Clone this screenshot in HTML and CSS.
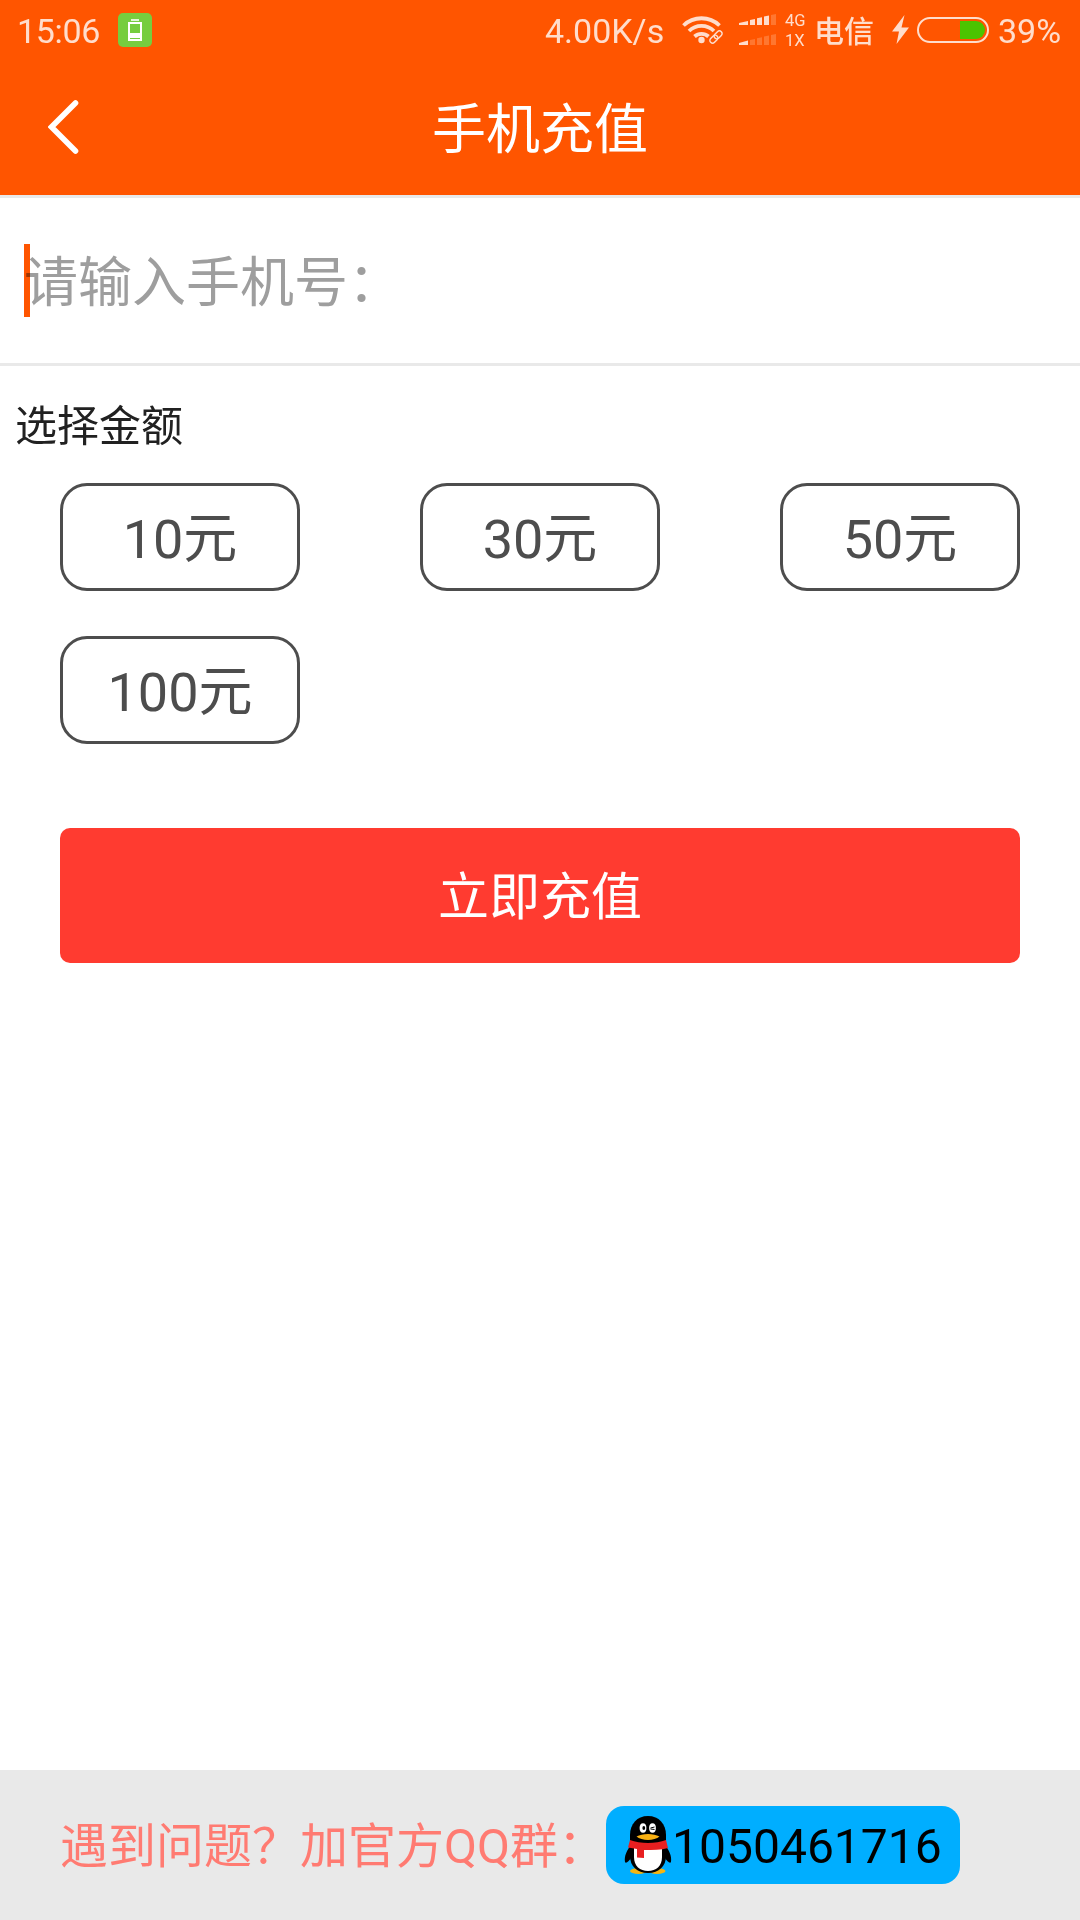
FILE: index.html
```html
<!DOCTYPE html>
<html lang="zh-CN">
<head>
  <meta charset="UTF-8">
  <meta name="viewport" content="width=device-width, initial-scale=1.0">
  <title>手机充值</title>
  <link rel="stylesheet" href="styles.css">
</head>
<body>
  <header class="header">
    <!-- Status bar -->
    <div class="status-bar">
      <span class="time">15:06</span>
      <svg class="app-icon" viewBox="0 0 34 34">
        <rect width="34" height="34" rx="5" fill="#76cd3f"/>
        <path d="M13 7h8" stroke="#fff" stroke-width="1.600"/>
        <rect x="11" y="10" width="12" height="17" fill="none" stroke="#fff" stroke-width="2"/>
        <rect x="12" y="20" width="10" height="5" fill="#fff"/>
      </svg>
      <span class="speed">4.00K/s</span>
      <svg class="wifi" viewBox="0 0 42 30">
        <g fill="none" stroke="#ffddcc" stroke-width="3.800">
          <path d="M1.500 10.500a26 26 0 0 1 36 0"/>
          <path d="M7 16a18 18 0 0 1 25 0"/>
          <path d="M12.500 21.500a10.500 10.500 0 0 1 14 0"/>
        </g>
        <circle cx="19.500" cy="25" r="3.200" fill="#ffddcc"/>
        <g transform="translate(34 22) rotate(-45)" fill="none">
          <rect x="-8" y="-3" width="9" height="6" rx="3" stroke="#ff5500" stroke-width="4"/>
          <rect x="-1" y="-3" width="9" height="6" rx="3" stroke="#ff5500" stroke-width="4"/>
          <rect x="-7.500" y="-2.700" width="9" height="5.400" rx="2.700" stroke="#ffddcc" stroke-width="1.500"/>
          <rect x="-1.500" y="-2.700" width="9" height="5.400" rx="2.700" stroke="#ffddcc" stroke-width="1.500"/>
        </g>
      </svg>
      <svg class="signal" viewBox="0 0 38 32">
        <g fill="#ffddcc">
          <path d="M0 9l9-2v4H0z"/>
          <path d="M11 6l5-1v6h-5z"/>
          <path d="M18 4.300l5-1V11h-5z"/>
          <path d="M25 2.500l5-1V11h-5z"/>
          <path d="M0 29l9-2.500V31H0z"/>
        </g>
        <g fill="#ff7730">
          <path d="M32 1l5-1v11h-5z"/>
          <path d="M11 26l5-1v6h-5z"/>
          <path d="M18 24.300l5-1V31h-5z"/>
          <path d="M25 22.500l5-1V31h-5z"/>
          <path d="M32 21l5-1v11h-5z"/>
        </g>
      </svg>
      <div class="network">
        <span>4G</span>
        <span>1X</span>
      </div>
      <span class="carrier">电信</span>
      <svg class="bolt" viewBox="0 0 18 30">
        <path d="M12.500 0L0 16.500h7L4.500 29 17 12.500H9.500z" fill="#ffddcc"/>
      </svg>
      <svg class="battery" viewBox="0 0 72 26">
        <rect x="1" y="1" width="70" height="24" rx="12" fill="none" stroke="#ffddcc" stroke-width="2"/>
        <path d="M43 4h16a9 9 0 0 1 0 18H43z" fill="#4bc400"/>
      </svg>
      <span class="percent">39%</span>
    </div>

    <!-- Title bar -->
    <div class="title-bar">
      <svg class="back" viewBox="0 0 32 54">
        <path d="M27.500 3L3.500 27l24 24" fill="none" stroke="#fff" stroke-width="5.600" stroke-linecap="round"/>
      </svg>
      <h1>手机充值</h1>
    </div>
  </header>

  <main class="content">
    <div class="phone-row">
      <span class="cursor"></span>
      <span class="placeholder">请输入手机号：</span>
    </div>

    <h2 class="label">选择金额</h2>
    <div class="amounts">
      <button class="amount">10元</button>
      <button class="amount">30元</button>
      <button class="amount">50元</button>
      <button class="amount">100元</button>
    </div>

    <button class="submit">立即充值</button>
  </main>

  <footer class="footer">
    <span class="help">遇到问题？加官方QQ群：</span>
    <a class="group">
      <svg class="qq" viewBox="0 0 48 58">
        <ellipse cx="14.500" cy="55" rx="8.500" ry="3" fill="#f5b511"/>
        <ellipse cx="33" cy="55" rx="8.500" ry="3" fill="#f5b511"/>
        <path d="M7 29C3 34 0 40 1 46c1 2 4-1 6-4zM41 29c4 5 7 11 6 17-1 2-4-1-6-4z" fill="#000"/>
        <path d="M24 0C13 0 6 8 6 19v21c0 10 7 17 18 17s18-7 18-17V19C42 8 35 0 24 0z" fill="#000"/>
        <path d="M10 31h28v10c0 9-6 14-14 14s-14-5-14-14z" fill="#fff"/>
        <ellipse cx="19" cy="12" rx="3.400" ry="4.700" fill="#fff"/>
        <ellipse cx="28.500" cy="12" rx="3.400" ry="4.700" fill="#fff"/>
        <ellipse cx="19.800" cy="12" rx="1.400" ry="2" fill="#000"/>
        <path d="M26.500 12l4-1M26.500 13l4 .5" stroke="#000" stroke-width="1"/>
        <path d="M12.500 20.500c6-3.500 17-3.500 23 0-5 4.500-18 4.500-23 0z" fill="#f9b112"/>
        <path d="M6 24c10 4 26 4 36 0l2 8c-7 2-15 2-24 2v8l-7-.5V33l-9-1.500z" fill="#e81f20"/>
      </svg>
      <span>1050461716</span>
    </a>
  </footer>
</body>
</html>
```

FILE: styles.css
```css
* {
  box-sizing: border-box;
}

body {
  margin: 0;
  height: 1920px;
  display: flex;
  flex-direction: column;
  background: #fff;
  font-family: Roboto, "Noto Sans CJK SC", sans-serif;
  overflow: hidden;
}

h1, h2 {
  margin: 0;
  font-weight: 400;
}

button {
  padding: 0;
  font-family: inherit;
  cursor: pointer;
}

svg {
  display: block;
  flex-shrink: 0;
}

/* Header */
.header {
  height: 198px;
  background: #ff5500;
  border-bottom: 3px solid #e9e9e9;
}

.status-bar {
  height: 60px;
  padding: 1px 18px 0 17px;
  display: flex;
  align-items: center;
  color: #ffddcc;
  font-size: 34px;
  line-height: 60px;
  white-space: nowrap;
}

.time {
  width: 101px;
  letter-spacing: -0.3px;
}

.app-icon {
  width: 34px;
  height: 34px;
  margin-bottom: 1px;
}

.speed {
  width: 120px;
  margin-left: 393px;
}

.wifi {
  width: 42px;
  height: 30px;
  margin-left: 17px;
  margin-bottom: 2px;
}

.signal {
  width: 38px;
  height: 32px;
  margin-left: 15px;
  margin-bottom: 1px;
}

.network {
  width: 24px;
  margin-left: 8px;
  display: flex;
  flex-direction: column;
  font-size: 16.5px;
  line-height: 20px;
}

.carrier {
  width: 60px;
  margin-left: 5px;
  padding-top: 2px;
  font-size: 30px;
  font-weight: 500;
}

.bolt {
  width: 18px;
  height: 30px;
  margin-left: 18px;
  margin-bottom: 1px;
}

.battery {
  width: 72px;
  height: 26px;
  margin-left: 7px;
  margin-bottom: 1px;
}

.percent {
  margin-left: 9px;
}

.title-bar {
  height: 135px;
  padding: 0 48px;
  display: grid;
  grid-template-columns: 32px 1fr 32px;
  align-items: center;
  color: #fff;
}

.back {
  width: 32px;
  height: 54px;
  margin-bottom: 1px;
}

.title-bar h1 {
  padding-top: 7px;
  text-align: center;
  font-size: 54px;
  line-height: 80px;
}

/* Form */
.content {
  flex: 1;
}

.phone-row {
  height: 168px;
  padding-left: 24px;
  display: flex;
  align-items: center;
  border-bottom: 3px solid #e9e9e9;
}

.cursor {
  width: 6px;
  height: 73px;
  margin-right: -6px;
  background: #ff5500;
}

.placeholder {
  padding-bottom: 5px;
  color: #9e9e9e;
  font-size: 54px;
  mix-blend-mode: multiply;
}

.label {
  padding: 30px 15px 0;
  color: #212121;
  font-size: 42px;
  line-height: 62px;
}

.amounts {
  padding: 25px 60px 0;
  display: grid;
  grid-template-columns: repeat(3, 240px);
  gap: 45px 120px;
}

.amount {
  height: 108px;
  padding-bottom: 6px;
  border: 3px solid #4d4d4d;
  border-radius: 27px;
  background: #fff;
  color: #4d4d4d;
  font-size: 54px;
}

.submit {
  display: block;
  width: 960px;
  height: 135px;
  margin: 84px auto 0;
  padding-bottom: 6px;
  border: none;
  border-radius: 10px;
  background: #ff3b30;
  color: #fff;
  font-size: 51px;
}

/* Footer */
.footer {
  height: 150px;
  padding-left: 60px;
  display: flex;
  align-items: center;
  background: #e9e9e9;
  font-size: 48px;
  white-space: nowrap;
}

.help {
  width: 546px;
  padding-bottom: 7px;
  color: #ff7b72;
}

.group {
  width: 354px;
  height: 78px;
  padding-left: 18px;
  display: flex;
  align-items: center;
  border-radius: 18px;
  background: #00aeff;
  color: #000;
}

.group span {
  padding-top: 2px;
}

.qq {
  width: 48px;
  height: 58px;
}
```
